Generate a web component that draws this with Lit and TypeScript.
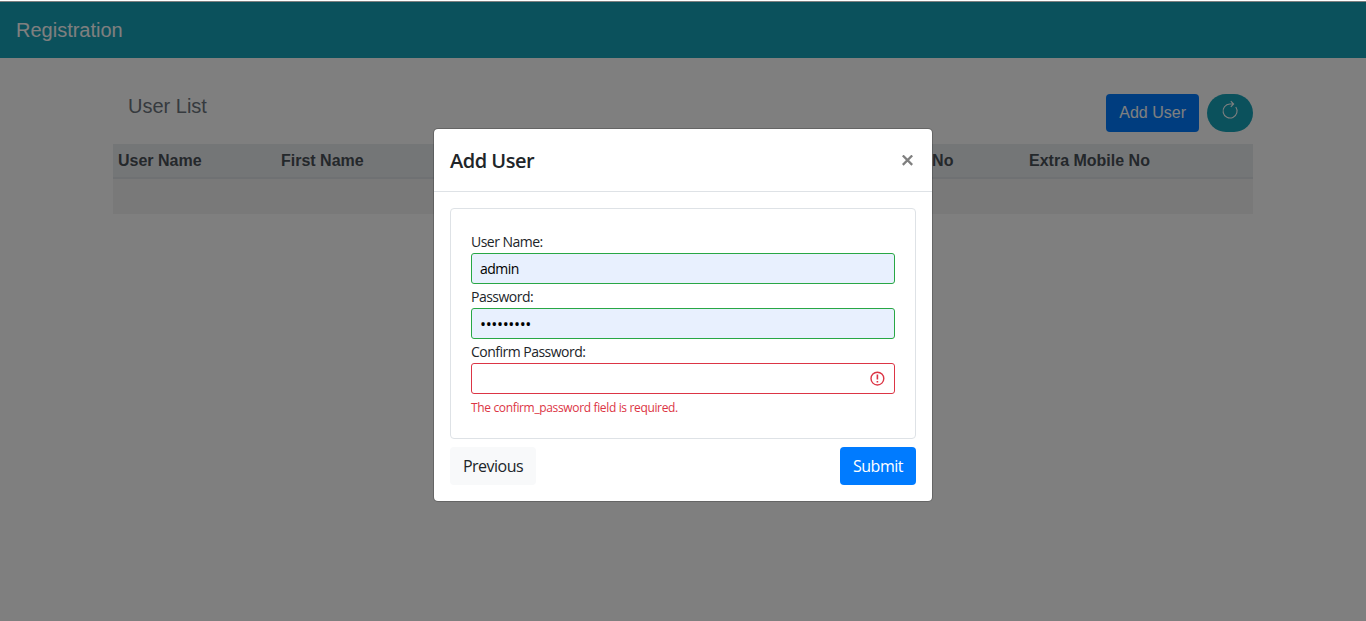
import { LitElement, html, css } from "lit";
import { customElement } from "lit/decorators.js";

@customElement("app-root")
export class AppRoot extends LitElement {
  static styles = css`
    :host {
      display: block;
      position: relative;
      height: 621px;
      overflow: hidden;
      background: #fff;
      color: #212529;
      font: 16px/24px "Liberation Sans", Arial, sans-serif;
    }
    * { box-sizing: border-box; }
    .page { padding-top: 2px; }
    .navbar {
      height: 56px;
      padding: 13px 16px;
      background: #17a2b8;
      color: #fff;
      font-size: 20px;
      line-height: 30px;
    }
    .container { width: 1140px; margin: 0 auto; padding-top: 36px; }
    .toolbar { display: flex; height: 50px; align-items: flex-start; }
    .title {
      flex: 1;
      margin: 0;
      padding-left: 15px;
      font-size: 20px;
      font-weight: 400;
      line-height: 24px;
      color: #6c757d;
    }
    button { font: inherit; border: 1px solid transparent; border-radius: 4px; padding: 6px 12px; height: 38px; }
    .primary { background: #007bff; color: #fff; }
    .light { background: #f8f9fa; color: #212529; }
    .refresh {
      width: 46px;
      margin-left: 8px;
      padding: 5px 0 0;
      border-radius: 19px;
      background: #17a2b8;
      color: #fff;
      display: flex;
      justify-content: center;
    }
    .row { display: grid; grid-template-columns: 163px 596px 152px 1fr; }
    .head { height: 35px; background: #e9ecef; border-bottom: 2px solid #dee2e6; color: #495057; font-weight: 700; }
    .head span { padding: 5px 5px 4px; white-space: nowrap; }
    .empty { height: 35px; background: #f2f2f2; }
    .backdrop { position: absolute; inset: 1px 0 0; background: rgba(0, 0, 0, 0.5); }
    .modal {
      position: absolute;
      left: 433px;
      top: 128px;
      width: 500px;
      height: 374px;
      background: #fff;
      background-clip: padding-box;
      border: 1px solid rgba(0, 0, 0, 0.2);
      border-radius: 5px;
      font-family: "Open Sans", "Noto Sans", sans-serif;
    }
    .modal-head {
      display: flex;
      justify-content: space-between;
      height: 63px;
      padding: 16px;
      border-bottom: 1px solid #dee2e6;
    }
    .modal-title { margin: 0; font-size: 20px; font-weight: 600; line-height: 32px; letter-spacing: -0.5px; }
    .close { display: block; margin: 10px 3px 0 0; }
    .modal-body { padding: 16px; }
    .card { height: 231px; padding: 24px 20px 0; border: 1px solid #dee2e6; border-radius: 4px; }
    label { display: block; height: 20px; font-size: 14px; line-height: 18px; letter-spacing: -0.52px; white-space: nowrap; }
    .field { display: flex; align-items: center; height: 31px; margin-bottom: 4px; border: 1px solid #28a745; border-radius: 3px; background: #e8f0fe; padding: 0 9px 0 8px; }
    .field input {
      flex: 1;
      min-width: 0;
      border: 0;
      padding: 0;
      outline: 0;
      background: transparent;
      color: #000;
      font: 14px/21px "Open Sans", "Noto Sans", sans-serif;
      letter-spacing: -0.5px;
    }
    .field .pw { font-size: 16px; letter-spacing: -0.35px; padding-top: 1px; }
    .field.invalid { border-color: #dc3545; background: #fff; }
    .error { margin-top: 5px; color: #dc3545; font-size: 12px; line-height: 18px; letter-spacing: -0.35px; white-space: nowrap; }
    .actions { display: flex; justify-content: space-between; margin-top: 8px; }
    .actions button { white-space: nowrap; padding: 6px 0; text-align: center; letter-spacing: -0.5px; }
    .prev { width: 86px; }
    .submit { width: 76px; }
  `;

  render() {
    return html`
      <div class="page">
        <nav class="navbar">Registration</nav>
        <main class="container">
          <div class="toolbar">
            <h5 class="title">User List</h5>
            <button class="primary">Add User</button>
            <button class="refresh" aria-label="Refresh">
              <svg width="18" height="20" viewBox="0 0 18 20" fill="none" stroke="currentColor" stroke-width="1.1">
                <path d="M14.8 7A7 7 0 1 1 8.8 4H12.4M9.8 1.2l2.8 2.8-2.8 2.8" />
              </svg>
            </button>
          </div>
          <div class="row head">
            <span>User Name</span><span>First Name</span><span>Mobile No</span><span>Extra Mobile No</span>
          </div>
          <div class="empty"></div>
        </main>
      </div>
      <div class="backdrop"></div>
      <section class="modal" role="dialog">
        <header class="modal-head">
          <h5 class="modal-title">Add User</h5>
          <svg class="close" width="11" height="11" viewBox="0 0 11 11" stroke="#7f7f7f" stroke-width="2.3">
            <path d="M.8 .5l9.4 9.4M10.2 .5L.8 9.9" />
          </svg>
        </header>
        <div class="modal-body">
          <div class="card">
            <label>User Name:</label>
            <div class="field"><input type="text" value="admin" /></div>
            <label>Password:</label>
            <div class="field"><input class="pw" type="password" value="123456789" /></div>
            <label>Confirm Password:</label>
            <div class="field invalid">
              <input type="password" />
              <svg width="16" height="16" viewBox="0 0 16 16" fill="none" stroke="#dc3545" stroke-width="1.4">
                <circle cx="8.4" cy="7.6" r="6.4" />
                <path d="M8.4 3.6v5M8.4 9.9v1.6" stroke-width="1.6" />
              </svg>
            </div>
            <div class="error">The confirm_password field is required.</div>
          </div>
          <div class="actions">
            <button class="light prev">Previous</button>
            <button class="primary submit">Submit</button>
          </div>
        </div>
      </section>
    `;
  }
}
